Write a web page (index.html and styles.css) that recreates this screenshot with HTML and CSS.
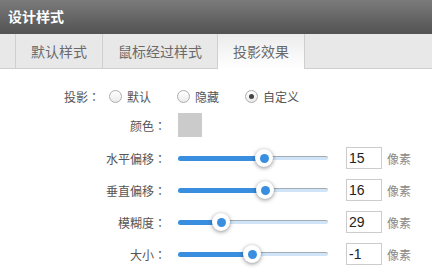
FILE: index.html
```html
<!DOCTYPE html>
<html>
<head>
<meta charset="utf-8">
<link rel="stylesheet" href="styles.css">
</head>
<body>
<div class="panel">
  <div class="header">设计样式</div>
  <div class="tabs">
    <div class="tab-spacer"></div>
    <div class="tab">默认样式</div>
    <div class="tab">鼠标经过样式</div>
    <div class="tab active">投影效果</div>
  </div>
  <div class="form">
    <div class="row-radio">
      <span class="radio-label">投影<span class="colon">：</span></span>
      <label class="opt"><span class="radio"></span>默认</label>
      <label class="opt"><span class="radio"></span>隐藏</label>
      <label class="opt"><span class="radio checked"></span>自定义</label>
    </div>
    <div class="row row-color">
      <span class="label">颜色<span class="colon">：</span></span>
      <span class="swatch"></span>
    </div>
    <div class="row">
      <span class="label">水平偏移<span class="colon">：</span></span>
      <div class="slider"><div class="fill" style="width:86px"></div><div class="rest"></div><span class="thumb" style="left:86px"></span></div>
      <span class="num">15</span><span class="unit">像素</span>
    </div>
    <div class="row">
      <span class="label">垂直偏移<span class="colon">：</span></span>
      <div class="slider"><div class="fill" style="width:87px"></div><div class="rest"></div><span class="thumb" style="left:87px"></span></div>
      <span class="num">16</span><span class="unit">像素</span>
    </div>
    <div class="row">
      <span class="label">模糊度<span class="colon">：</span></span>
      <div class="slider"><div class="fill" style="width:43px"></div><div class="rest"></div><span class="thumb" style="left:43px"></span></div>
      <span class="num">29</span><span class="unit">像素</span>
    </div>
    <div class="row">
      <span class="label">大小<span class="colon">：</span></span>
      <div class="slider"><div class="fill" style="width:74px"></div><div class="rest"></div><span class="thumb" style="left:74px"></span></div>
      <span class="num">-1</span><span class="unit">像素</span>
    </div>
  </div>
</div>
</body>
</html>
```

FILE: styles.css
```css
html, body {
  margin: 0;
  padding: 0;
  background: #fff;
}
body {
  font-family: "Noto Sans CJK SC", "Noto Sans", sans-serif;
  width: 432px;
  height: 279px;
  overflow: hidden;
}
.header {
  height: 34px;
  line-height: 33px;
  padding-left: 8px;
  background: linear-gradient(#7b7b7b, #525252);
  color: #fff;
  font-size: 14px;
  font-weight: bold;
}
.tabs {
  display: flex;
  height: 34px;
  background: #e8e8e8;
  border-bottom: 1px solid #cfcfcf;
}
.tab-spacer {
  width: 15px;
  border-right: 1px solid #cfcfcf;
}
.tab {
  padding: 0 15px;
  border-right: 1px solid #cfcfcf;
  font-size: 14px;
  line-height: 34px;
  color: #6a6a6a;
}
.active {
  background: linear-gradient(#ececec, #fff);
  height: 35px;
  margin-bottom: -1px;
}
.form {
  padding-top: 15px;
  color: #555;
  font-size: 12px;
}
.colon {
  font-family: "Noto Sans CJK TC", sans-serif;
}
.row-radio {
  display: flex;
  align-items: center;
  height: 24px;
  padding-left: 64px;
}
.radio-label {
  width: 45px;
}
.opt {
  display: flex;
  align-items: center;
  gap: 5px;
  margin-right: 26px;
}
.radio {
  width: 11px;
  height: 11px;
  border: 1px solid #adadad;
  border-radius: 50%;
  background: linear-gradient(#fff, #eaeaea);
  display: flex;
  align-items: center;
  justify-content: center;
}
.radio.checked::after {
  content: "";
  width: 5px;
  height: 5px;
  border-radius: 50%;
  background: #444;
}
.row {
  display: flex;
  align-items: center;
  height: 22px;
  margin-top: 10px;
}
.row-color {
  height: 24px;
  margin-top: 5px;
}
.label {
  width: 166px;
  text-align: right;
  margin-right: 12px;
}
.swatch {
  width: 24px;
  height: 24px;
  background: #cbcbcb;
}
.slider {
  position: relative;
  width: 150px;
  height: 22px;
  display: flex;
  align-items: center;
}
.fill {
  height: 5px;
  background: #3a8ee0;
  border-radius: 3px 0 0 3px;
}
.rest {
  flex: 1;
  height: 3px;
  border-top: 1px solid #a3acb4;
  background: #cfe5f7;
  border-radius: 0 2px 2px 0;
}
.thumb {
  position: absolute;
  top: 2px;
  width: 18px;
  height: 18px;
  margin-left: -9px;
  border-radius: 50%;
  background: #fff;
  box-shadow: 0 1px 4px rgba(0, 0, 0, 0.45);
  display: flex;
  align-items: center;
  justify-content: center;
}
.thumb::after {
  content: "";
  width: 9px;
  height: 9px;
  border-radius: 50%;
  background: #3a8ee0;
}
.num {
  box-sizing: border-box;
  width: 36px;
  height: 22px;
  margin-left: 18px;
  border: 1px solid #cccccc;
  padding-left: 2px;
  font-family: "Liberation Sans", Arial, sans-serif;
  font-size: 14px;
  line-height: 20px;
  color: #222;
}
.unit {
  margin-left: 5px;
  color: #888;
}
```
